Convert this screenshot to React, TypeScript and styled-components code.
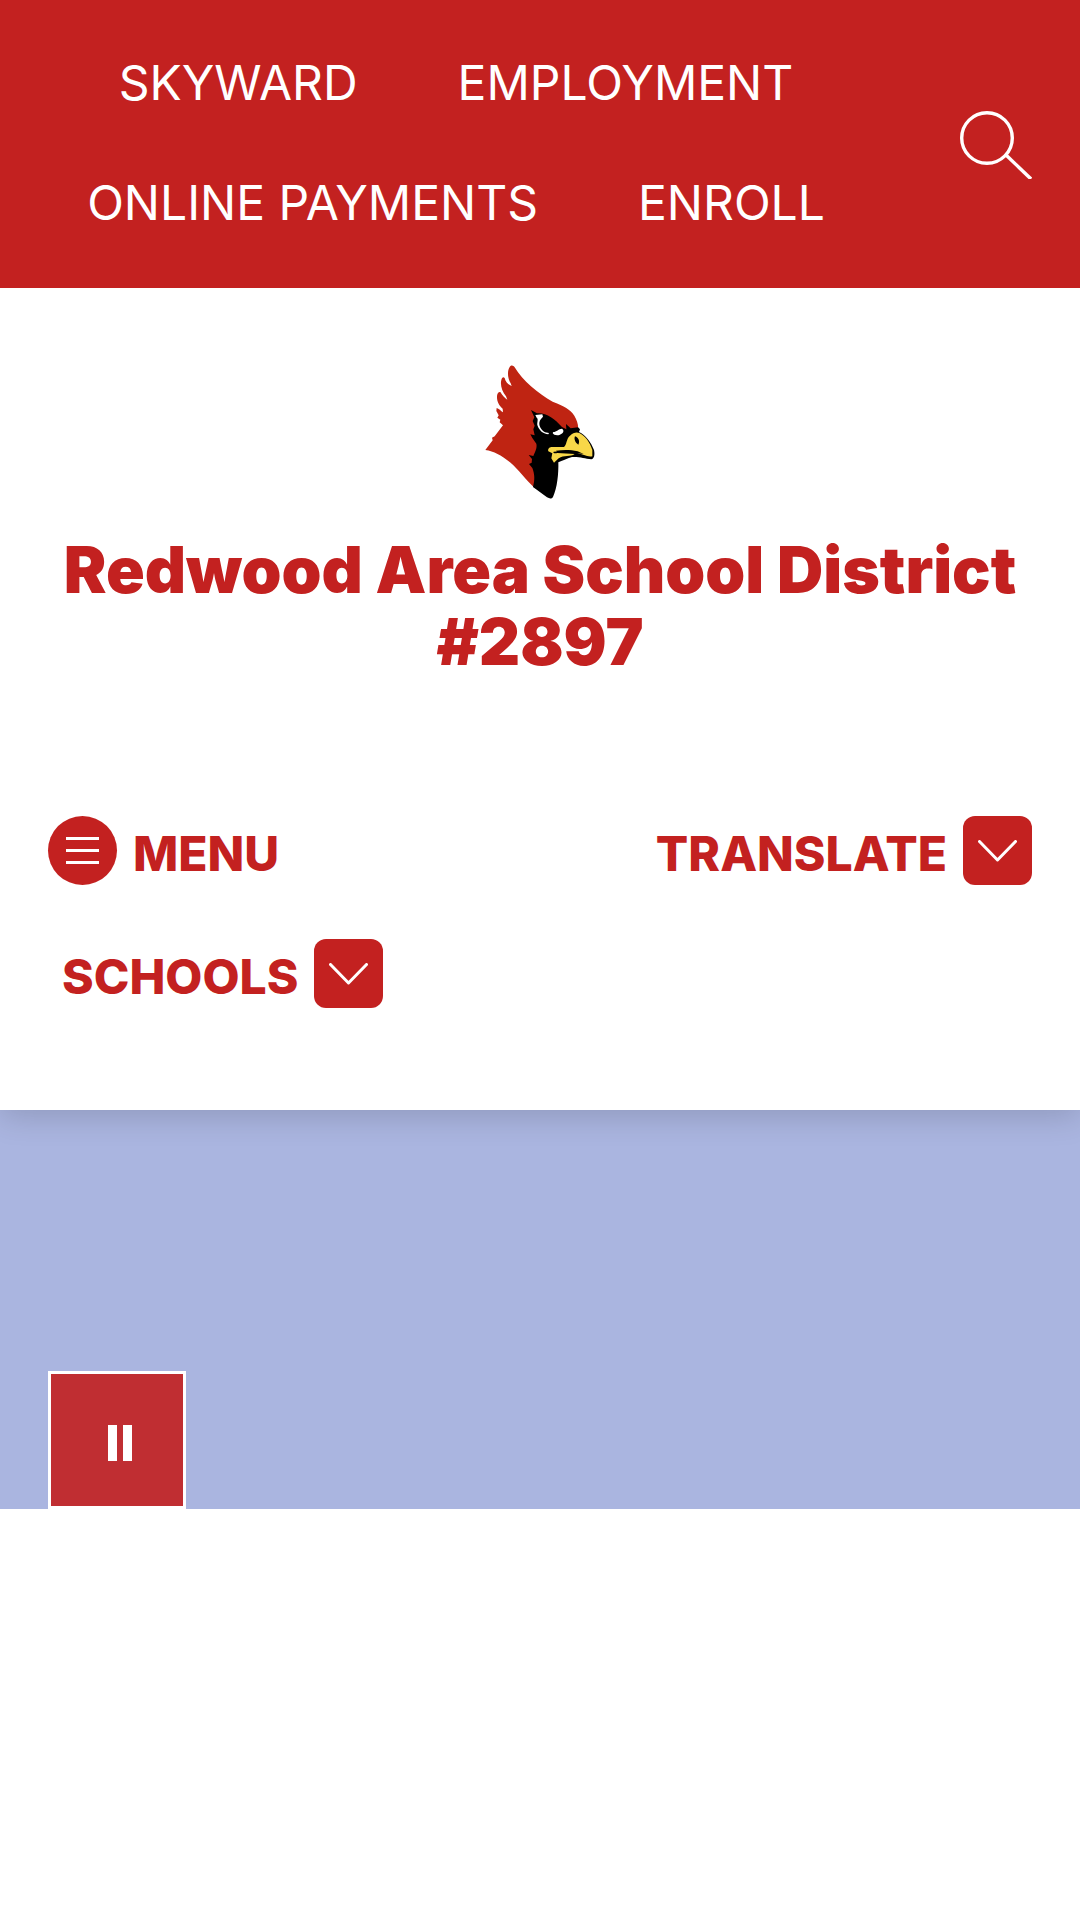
import React from "react";
import styled, { createGlobalStyle } from "styled-components";

const RED = "#c32120";

const GlobalStyle = createGlobalStyle`
  *, *::before, *::after { box-sizing: border-box; }
  body {
    margin: 0;
    background: #fff;
    font-family: Inter, "Liberation Sans", sans-serif;
  }
`;

const TopBar = styled.div`
  position: relative;
  z-index: 1;
  display: flex;
  align-items: center;
  gap: 48px;
  padding: 47px 48px 49px 0;
  background: ${RED};
`;

const QuickLinks = styled.nav`
  flex: 1;
  display: flex;
  flex-wrap: wrap;
  justify-content: center;
  row-gap: 48px;
`;

const QuickLink = styled.a`
  padding: 0 50px;
  color: #fff;
  font-size: 48px;
  line-height: 72px;
  text-decoration: none;
  text-transform: uppercase;
  white-space: nowrap;
`;

const IconButton = styled.button`
  display: flex;
  padding: 0;
  border: 0;
  background: none;
  cursor: pointer;
`;

const Header = styled.header`
  position: relative;
  background: #fff;
  box-shadow: 0 6px 30px rgba(0, 0, 0, 0.16);
`;

const Brand = styled.a`
  display: flex;
  flex-direction: column;
  align-items: center;
  gap: 34px;
  padding: 77px 48px 0;
  color: ${RED};
  text-decoration: none;
`;

const SchoolName = styled.h1`
  margin: 0;
  font-size: 64px;
  font-weight: 900;
  line-height: 72px;
  text-align: center;
`;

const Actions = styled.div`
  display: grid;
  grid-template-columns: 1fr auto;
  justify-items: start;
  row-gap: 54px;
  padding: 138px 48px 102px;
`;

const Action = styled.button<{ $inset?: boolean }>`
  display: flex;
  align-items: center;
  gap: 16px;
  padding: 0 0 0 ${(p) => (p.$inset ? 14 : 0)}px;
  border: 0;
  background: none;
  color: ${RED};
  font: inherit;
  font-size: 48px;
  font-weight: 800;
  line-height: 60px;
  text-transform: uppercase;
  cursor: pointer;
`;

const ActionLabel = styled.span`
  padding-top: 6px;
`;

const Badge = styled.span<{ $round?: boolean }>`
  display: flex;
  align-items: center;
  justify-content: center;
  width: 69px;
  height: 69px;
  border-radius: ${(p) => (p.$round ? "50%" : "12px")};
  background: ${RED};
`;

const Hero = styled.section`
  display: flex;
  align-items: flex-end;
  height: 399px;
  padding: 0 48px;
  background: #aab5e0;
`;

const PauseButton = styled.button`
  display: flex;
  align-items: center;
  justify-content: center;
  width: 138px;
  height: 138px;
  padding: 6px 0 0 6px;
  border: 3px solid #fff;
  background: #c02e32;
  cursor: pointer;
`;

const SearchIcon = () => (
  <svg width="72" height="72" viewBox="0 0 72 72" fill="none" stroke="#fff" strokeWidth="3.4" aria-hidden="true">
    <circle cx="27" cy="31" r="25.3" />
    <path d="M45.5 47.5 71 72" />
  </svg>
);

const MenuIcon = () => (
  <svg width="33" height="27" viewBox="0 0 33 27" fill="#fff" aria-hidden="true">
    <path d="M0 0h33v3H0zM0 12h33v3H0zM0 24h33v3H0z" />
  </svg>
);

const ChevronIcon = () => (
  <svg width="39" height="22" viewBox="0 0 39 22" fill="none" stroke="#fff" strokeWidth="3" strokeLinecap="round" strokeLinejoin="round" aria-hidden="true">
    <path d="M1.5 1.5 19.5 20 37.5 1.5" />
  </svg>
);

const PauseIcon = () => (
  <svg width="24" height="36" viewBox="0 0 24 36" fill="#fff" aria-hidden="true">
    <path d="M0 0h9v36H0zM15 0h9v36h-9z" />
  </svg>
);

const CardinalLogo = () => (
  <svg width="110" height="135" viewBox="45 45 330 405" role="img" aria-label="Cardinal logo">
    <path fill="#bf2412" d="M46 300 68 271 66 263 74 259 99 226 89 217 91 209 82 203 86 196 79 183 80 174C86 175 93 183 99 187L98 176C87 167 80 153 81 138 82 129 86 125 91 126 97 137 106 146 112 149L108 139C96 124 90 105 94 90 96 82 100 80 104 84 107 97 116 105 125 108L122 100C113 85 111 64 119 51 124 44 130 46 134 52 158 92 205 132 248 155 280 168 300 176 313 197 321 211 326 226 324 238L290 250 215 260 215 420 193 413C170 393 145 358 120 337 93 315 72 304 46 300Z" />
    <path fill="#000" d="M183 180 201 190C230 188 254 207 276 231L289 238 288 222 302 235 324 232 330 238 327 246C347 255 363 277 372 300 375 314 373 326 364 328 344 326 331 320 306 321 290 326 277 332 265 337 266 370 262 414 249 441 244 448 238 446 231 442L189 411C195 389 194 372 187 354L177 342 185 338 186 327 176 315 190 318C195 305 202 294 199 281L187 264 181 253 194 256 190 238 194 227 188 213 193 202Z" />
    <path fill="#fff" d="M196 195 217 193 219 200 213 207C203 218 208 237 225 247L237 249 235 253C218 251 207 241 202 225 201 216 206 206 200 203ZM248 249 250 246C260 246 266 236 276 236 284 242 280 249 270 254 261 258 251 255 248 249Z" />
    <path fill="#f8d748" d="M300 257C309 248 320 245 328 249 345 257 360 277 367 300L367 319C351 322 339 312 322 309 302 304 287 303 268 304L251 305C248 309 254 311 262 309L314 312C302 322 281 314 266 325L252 338 244 325 247 310 235 304C232 295 240 291 247 291L282 291C291 284 288 267 300 257Z" />
    <path fill="#000" d="M315 259C325 263 331 273 325 284 316 279 311 267 315 259ZM258 302C282 299 301 299 323 304L341 312 318 309 262 307Z" />
  </svg>
);

export default function App() {
  return (
    <>
      <GlobalStyle />
      <TopBar>
        <QuickLinks aria-label="Quick links">
          <QuickLink href="#skyward">Skyward</QuickLink>
          <QuickLink href="#employment">Employment</QuickLink>
          <QuickLink href="#payments">Online Payments</QuickLink>
          <QuickLink href="#enroll">Enroll</QuickLink>
        </QuickLinks>
        <IconButton type="button" aria-label="Search">
          <SearchIcon />
        </IconButton>
      </TopBar>
      <Header>
        <Brand href="#home">
          <CardinalLogo />
          <SchoolName>Redwood Area School District #2897</SchoolName>
        </Brand>
        <Actions>
          <Action type="button">
            <Badge $round>
              <MenuIcon />
            </Badge>
            <ActionLabel>Menu</ActionLabel>
          </Action>
          <Action type="button">
            <ActionLabel>Translate</ActionLabel>
            <Badge>
              <ChevronIcon />
            </Badge>
          </Action>
          <Action type="button" $inset>
            <ActionLabel>Schools</ActionLabel>
            <Badge>
              <ChevronIcon />
            </Badge>
          </Action>
        </Actions>
      </Header>
      <Hero aria-label="Gallery">
        <PauseButton type="button" aria-label="Pause gallery">
          <PauseIcon />
        </PauseButton>
      </Hero>
    </>
  );
}
